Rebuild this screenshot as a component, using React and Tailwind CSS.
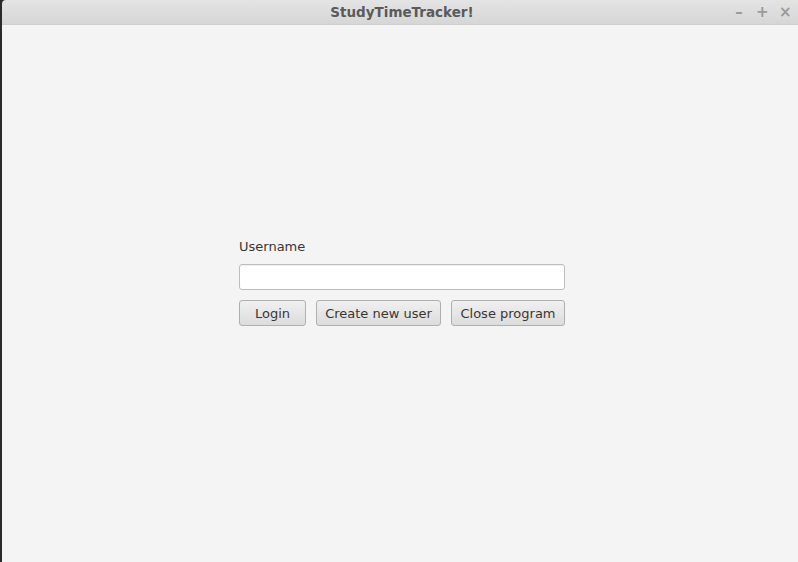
import React from "react";

export default function App() {
  const font = { fontFamily: '"DejaVu Sans", sans-serif' };
  return (
    <div className="w-[798px] h-[562px] bg-[#2a2a2a] flex overflow-hidden" style={font}>
      <div className="ml-[2px] flex-1 flex flex-col rounded-tl-[4px] overflow-hidden">
        <div className="h-[25px] shrink-0 bg-gradient-to-b from-[#e4e4e4] to-[#d6d6d6] border-b border-[#cfcfcf] flex items-center relative">
          <div className="flex-1 text-center text-[13.5px] font-bold text-[#5a5a5a] pl-[4px]">StudyTimeTracker!</div>
          <div className="absolute right-[7px] top-0 h-full flex items-center gap-[11px] text-[#9a9a9a] text-[15px] font-bold">
            <span className="w-[12px] text-center">–</span>
            <span className="w-[12px] text-center">+</span>
            <span className="w-[12px] text-center">×</span>
          </div>
        </div>
        <div className="flex-1 bg-[#f4f4f4] pl-[237px] pt-[214px]">
          <div className="w-[326px] flex flex-col">
            <div className="text-[13px] text-[#3a3632] leading-[16px] h-[16px]">Username</div>
            <div className="mt-[9px] h-[26px] bg-white border border-[#bdbdbd] rounded-[3px] shadow-[inset_0_1px_1px_rgba(0,0,0,0.06)]"></div>
            <div className="mt-[10px] flex justify-between">
              <button className="w-[67px] h-[26px] pt-[2px] rounded-[3px] border border-[#b0b0b0] bg-gradient-to-b from-[#f0f0f0] to-[#dcdcdc] text-[13px] text-[#3a3632]">Login</button>
              <button className="w-[125px] h-[26px] pt-[2px] rounded-[3px] border border-[#b0b0b0] bg-gradient-to-b from-[#f0f0f0] to-[#dcdcdc] text-[13px] text-[#3a3632]">Create new user</button>
              <button className="w-[114px] h-[26px] pt-[2px] rounded-[3px] border border-[#b0b0b0] bg-gradient-to-b from-[#f0f0f0] to-[#dcdcdc] text-[13px] text-[#3a3632]">Close program</button>
            </div>
          </div>
        </div>
      </div>
    </div>
  );
}
